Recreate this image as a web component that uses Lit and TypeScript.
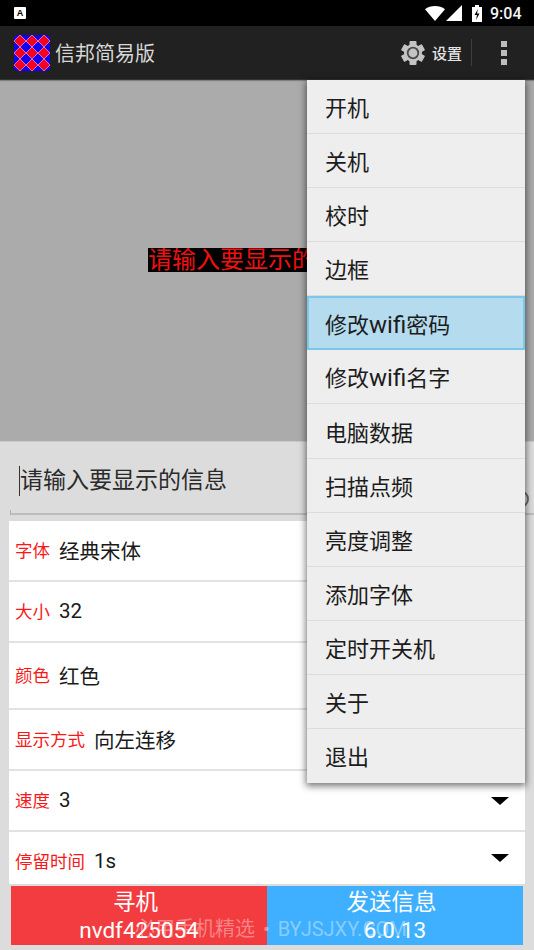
import { LitElement, html, css, svg } from "lit";
import { customElement } from "lit/decorators.js";

const CJK = css`Roboto, "Noto Sans CJK SC", sans-serif`;

@customElement("app-root")
export class AppRoot extends LitElement {
  static styles = css`
    :host { display: block; width: 534px; height: 950px; position: relative; overflow: hidden; background: #dcdcdc; font-family: Roboto, "Noto Sans CJK SC", sans-serif; }
    .status { height: 26px; background: #000; display: flex; align-items: center; padding: 0 8px 0 14px; color: #fff; }
    .notif { width: 12px; height: 12px; background: #fff; border-radius: 1px; color: #000; font: bold 9px/12px "Liberation Sans", sans-serif; text-align: center; }
    .status-right { margin-left: auto; display: flex; align-items: center; }
    .m1 { margin-left: 1px; }
    .m10 { margin-left: 10px; }
    .time { font-size: 16px; font-weight: 500; margin-left: 8px; color: #f5f5f5; width: 36px; }
    .toolbar { height: 53px; background: #212121; display: flex; align-items: center; padding: 0 0 0 14px; border-bottom: 1px solid #333; box-shadow: 0 1px 1px rgba(0,0,0,.25); position: relative; }
    .logo { width: 36px; height: 36px; border-radius: 4px; display: block; }
    .title { margin-left: 5px; padding-top: 2px; font-size: 20px; line-height: 26px; color: #d8d8d8; font-family: ${CJK}; }
    .actions { margin-left: auto; display: flex; align-items: center; }
    .set { margin-left: 7px; font-size: 15px; font-weight: 500; color: #e4e4e4; }
    .divider { width: 1px; height: 27px; background: #3e3e3e; margin: 0 29px 0 9px; }
    .dots { display: flex; flex-direction: column; gap: 3px; margin-right: 27px; }
    .dots i { width: 6px; height: 6px; background: #bdbdbd; display: block; }
    .preview { height: 361px; background: #ababab; display: flex; align-items: center; box-sizing: border-box; padding-left: 148px; }
    .led { background: #000; color: #f01010; width: 170px; height: 24px; white-space: nowrap; overflow: hidden; font: 24px/24px "Liberation Serif", "Noto Sans CJK SC", serif; margin-top: -1px; }
    .input { height: 74px; background: #dcdcdc; position: relative; padding: 0 19px; box-sizing: border-box; display: flex; align-items: center; border-top: 1px solid #c8c8c8; font-size: 23px; color: #2a2a2a; font-family: ${CJK}; }
    .input .txt { margin-top: 4px; border-left: 1px solid #333; line-height: 30px; height: 30px; }
    .input .line { position: absolute; left: 10px; right: 0; bottom: 0; height: 2px; background: #bdbdbd; }
    .input .line::before { content: ""; position: absolute; left: 0; bottom: 0; width: 1px; height: 5px; background: #b0b0b0; }
    .clear { position: absolute; right: 5px; top: 48px; width: 18px; height: 18px; border: 2px solid #6a6a6a; border-radius: 50%; box-sizing: border-box; }
    .list { margin: 6px 9px 0; background: #fff; display: flex; flex-direction: column; }
    .row { display: flex; align-items: center; border-bottom: 2px solid #e2e2e2; padding: 0 0 2px 6px; font-size: 20.5px; color: #1a1a1a; font-family: ${CJK}; position: relative; box-sizing: border-box; }
    .row:last-child { border-bottom: 0; padding: 5px 0 0 6px; }
    .lab { color: #f81818; font-size: 17.5px; margin-right: 9px; }
    .arrow { position: absolute; right: 16px; top: calc(50% - 4px); width: 0; height: 0; border: 9px solid transparent; border-top: 8px solid #000; border-bottom: 0; }
    .btns { margin: 2px 11px 0; display: flex; height: 59px; }
    .btn { flex: 1; box-sizing: border-box; padding-top: 2px; display: flex; flex-direction: column; align-items: center; color: #fff; font-size: 22.5px; line-height: 28px; font-family: ${CJK}; }
    .btn .top { padding-right: 7px; }
    .btn.red { background: #f33c40; }
    .btn.blue { background: #3fb0ff; }
    .wm { position: absolute; left: 135px; top: 915px; font-size: 20px; line-height: 28px; word-spacing: 3px; color: rgba(255,255,255,.38); white-space: nowrap; font-family: ${CJK}; }
    .menu { position: absolute; left: 307px; top: 80px; width: 218px; height: 703px; background: #eeeeee; box-shadow: 0 2px 7px 1px rgba(0,0,0,.55); display: flex; flex-direction: column; }
    .item { height: 54.08px; box-sizing: border-box; display: flex; align-items: center; padding: 0 0 1px 18px; font-size: 22px; color: #1c1c1c; font-family: ${CJK}; border-bottom: 1px solid #dcdcdc; }
    .item:last-child { border-bottom: 0; }
    .item.sel { background: #b5dcee; border: 2px solid #7cc8e8; padding-left: 16px; }
    .lat { font-size: 24px; }
  `;

  logo() {
    const cells = [];
    for (let y = 0; y < 3; y++) for (let x = 0; x < 3; x++) {
      const cx = 6 + x * 12, cy = 6 + y * 12;
      cells.push(svg`<polygon points="${cx},${cy - 6} ${cx + 6},${cy} ${cx},${cy + 6} ${cx - 6},${cy}" fill="#f5001e" stroke="#e88ad0" stroke-width=".8"/>`);
    }
    return html`<svg class="logo" viewBox="0 0 36 36"><rect width="36" height="36" fill="#1400f0"/>${cells}</svg>`;
  }

  gear() {
    const teeth = [0, 60, 120, 180, 240, 300].map(
      (a) => svg`<rect x="8.5" y="0" width="7" height="6" rx="1" fill="#c4c4c4" transform="rotate(${a} 12 12)"/>`
    );
    return html`<svg width="24" height="24" viewBox="0 0 24 24">${teeth}<circle cx="12" cy="12" r="9" fill="#c4c4c4"/><circle cx="12" cy="12" r="6.2" fill="#4a4a4a"/><circle cx="12" cy="12" r="4.4" fill="#c4c4c4"/></svg>`;
  }

  render() {
    const rows: [string, string, number, number?][] = [
      ["字体", "经典宋体", 61],
      ["大小", "32", 61],
      ["颜色", "红色", 67],
      ["显示方式", "向左连移", 61],
      ["速度", "3", 61, 1],
      ["停留时间", "1s", 52, 1],
    ];
    const items = [
      html`开机`, html`关机`, html`校时`, html`边框`,
      html`<span>修改<span class="lat">wifi</span>密码</span>`,
      html`<span>修改<span class="lat">wifi</span>名字</span>`,
      html`电脑数据`, html`扫描点频`, html`亮度调整`, html`添加字体`, html`定时开关机`, html`关于`, html`退出`,
    ];
    return html`
      <div class="status">
        <div class="notif">A</div>
        <div class="status-right">
          <svg width="20" height="15" viewBox="0 0 20 15"><path d="M0 3.2C2.7 1.1 6.3 0 10 0s7.3 1.1 10 3.2L10 15z" fill="#fff"/></svg>
          <svg class="m1" width="16" height="16" viewBox="0 0 16 16"><path d="M16 0v16H0z" fill="#fff"/></svg>
          <svg class="m10" width="10" height="17" viewBox="0 0 10 17"><path d="M3 0h4v2h3v15H0V2h3z" fill="#fff"/><path d="M6 4 2.5 10H5l-1 5 3.5-6.5H5z" fill="#000"/></svg>
          <span class="time">9:04</span>
        </div>
      </div>
      <div class="toolbar">
        ${this.logo()}
        <span class="title">信邦简易版</span>
        <div class="actions">
          ${this.gear()}
          <span class="set">设置</span>
          <span class="divider"></span>
          <span class="dots"><i></i><i></i><i></i></span>
        </div>
      </div>
      <div class="preview"><div class="led">请输入要显示的信息</div></div>
      <div class="input">
        <span class="txt">请输入要显示的信息</span>
        <span class="line"></span>
        <span class="clear"></span>
      </div>
      <div class="list">
        ${rows.map(([l, v, h, arrow]) => html`<div class="row" style="height:${h}px"><span class="lab">${l}</span><span>${v}</span>${arrow ? html`<span class="arrow"></span>` : ""}</div>`)}
      </div>
      <div class="btns">
        <div class="btn red"><span class="top">寻机</span><span>nvdf425054</span></div>
        <div class="btn blue"><span class="top">发送信息</span><span>6.0.13</span></div>
      </div>
      <div class="wm">必用手机精选 • BYJSJXY.COM</div>
      <div class="menu">
        ${items.map((t, i) => html`<div class="item ${i === 4 ? "sel" : ""}">${t}</div>`)}
      </div>
    `;
  }
}
